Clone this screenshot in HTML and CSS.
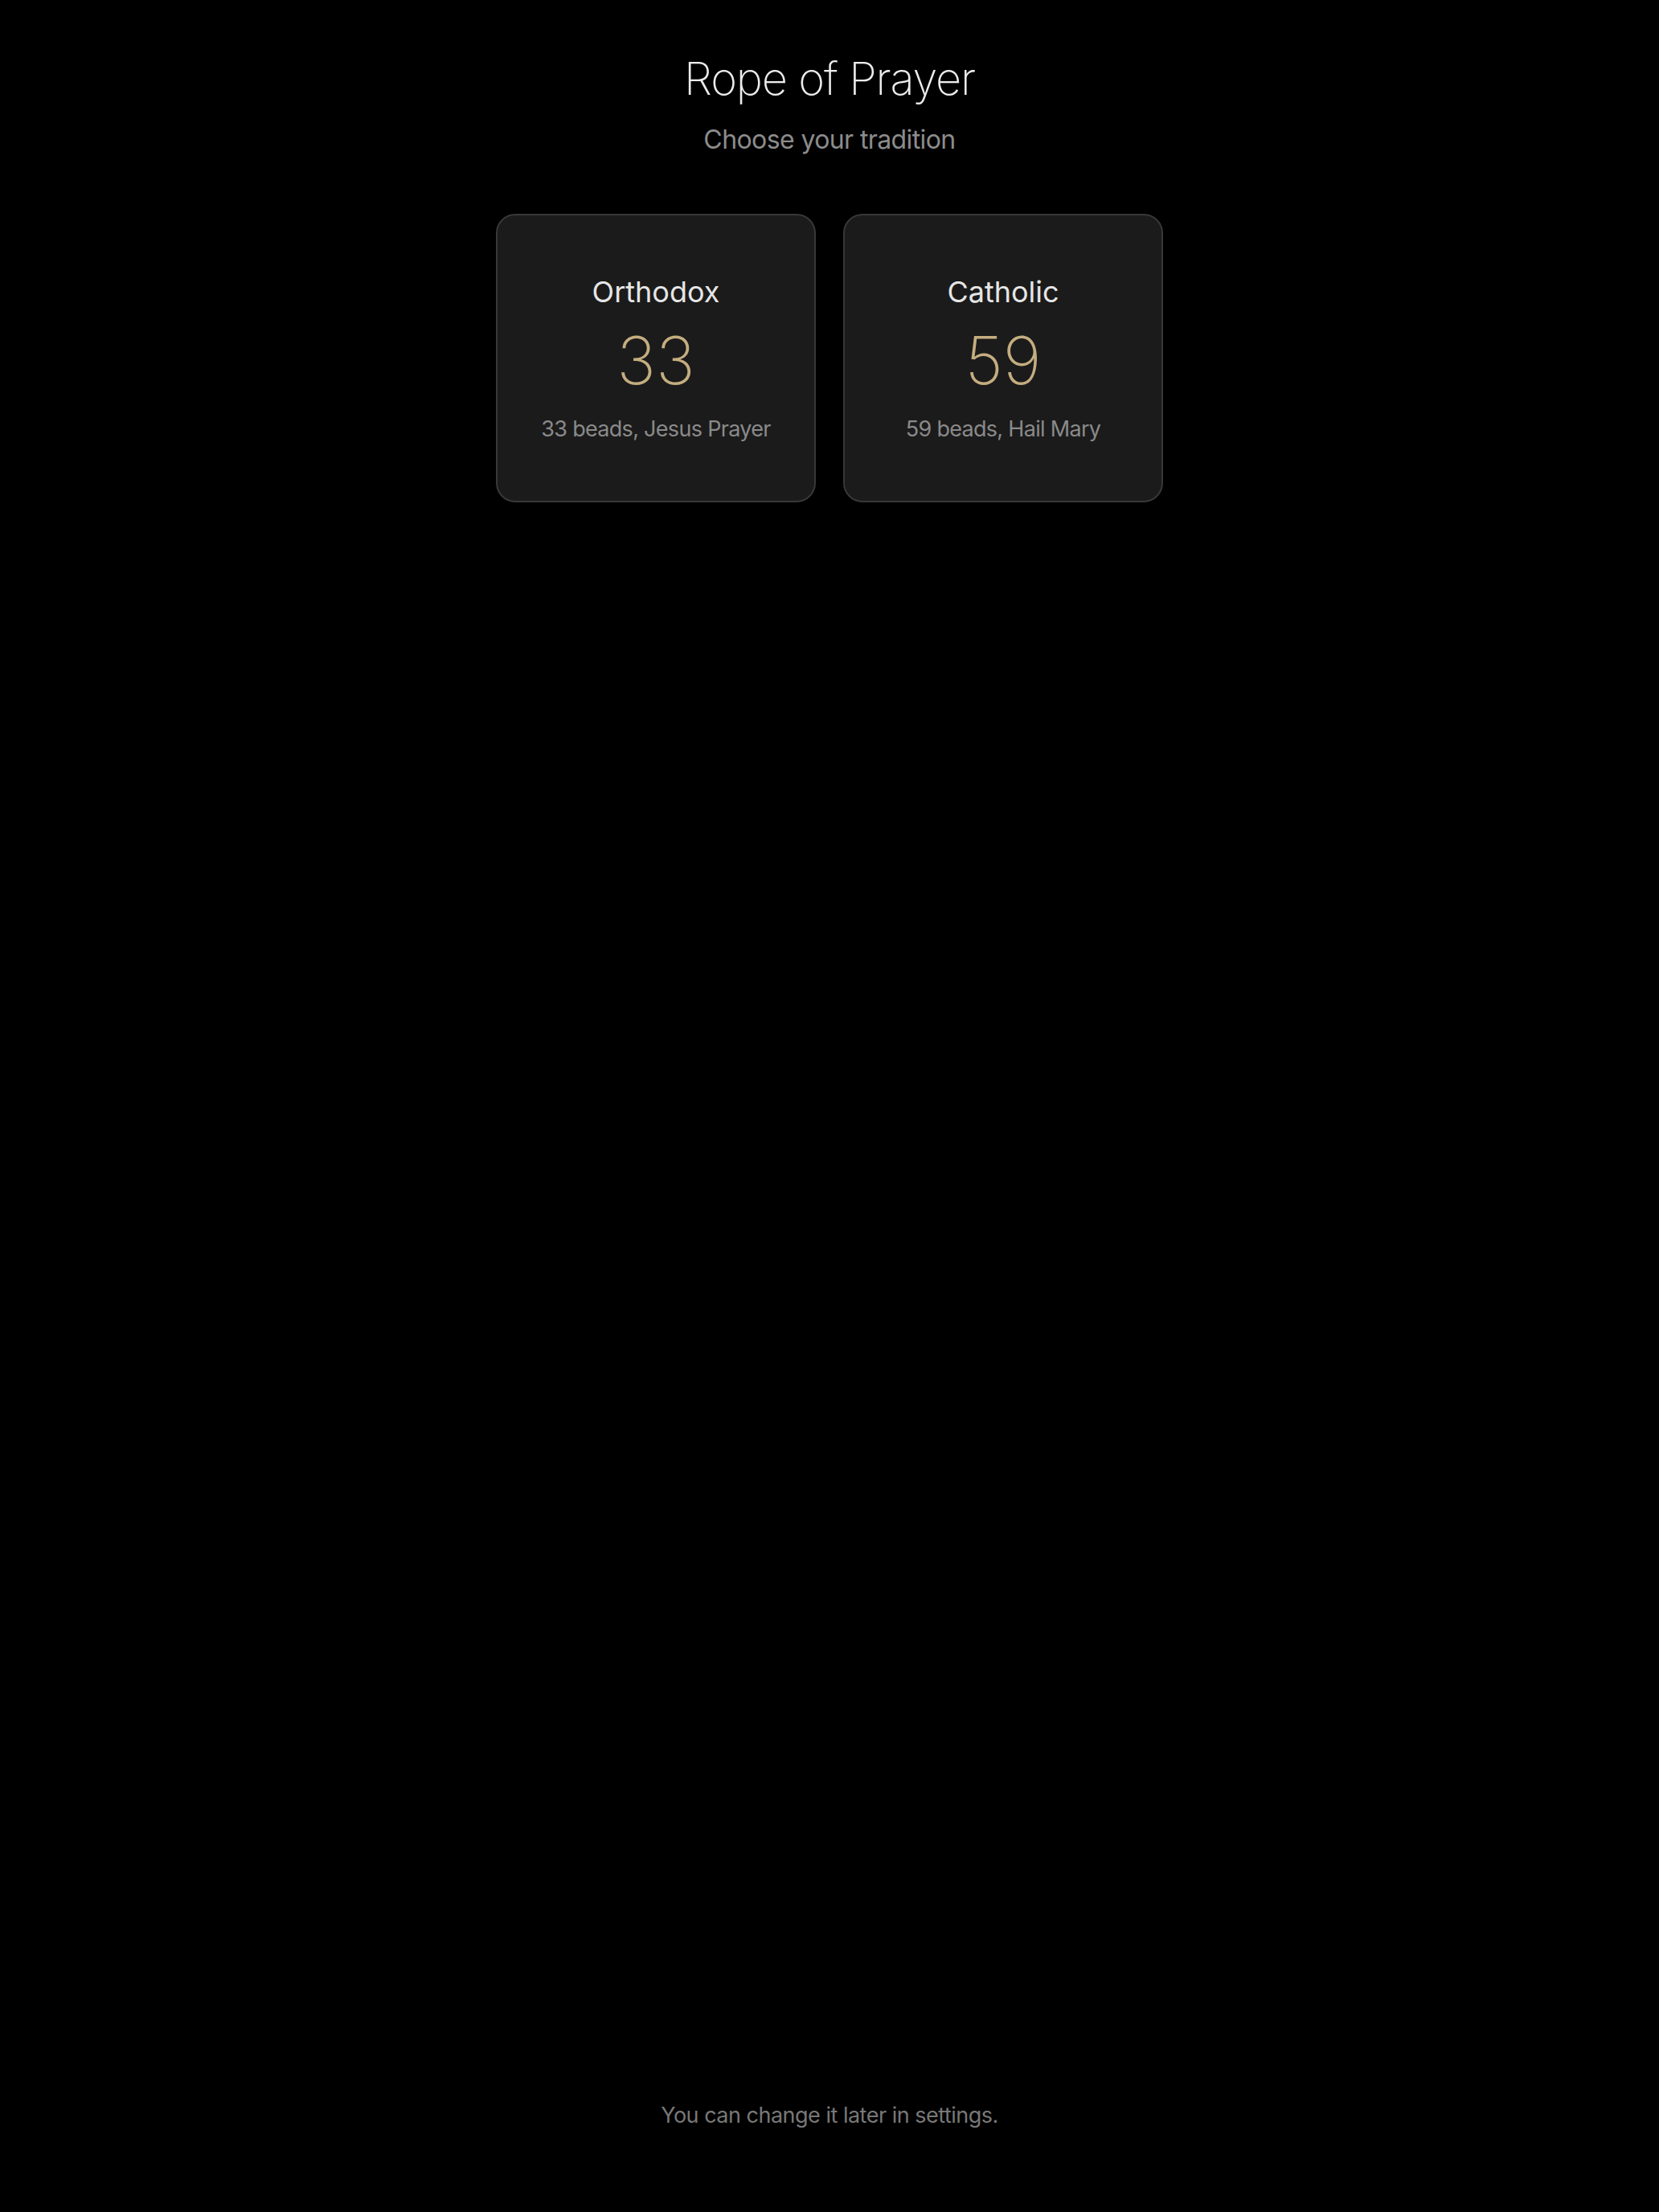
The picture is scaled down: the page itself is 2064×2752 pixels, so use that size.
FILE: index.html
```html
<!DOCTYPE html>
<html>
	<head>
		<meta charset="utf-8">
		<title>Rope of Prayer</title>
		<link rel="stylesheet" href="styles.css">
	</head>
	<body>
		<div class="screen">
			<h1 class="title">Rope of Prayer</h1>
			<p class="subtitle">Choose your tradition</p>
			<div class="choices">
				<div class="card">
					<span class="cardName">Orthodox</span>
					<span class="cardCount">33</span>
					<span class="cardDesc">33 beads, Jesus Prayer</span>
				</div>
				<div class="card">
					<span class="cardName">Catholic</span>
					<span class="cardCount">59</span>
					<span class="cardDesc">59 beads, Hail Mary</span>
				</div>
			</div>
			<p class="note">You can change it later in settings.</p>
		</div>
	</body>
</html>
```

FILE: styles.css
```css
*{
    margin: 0;
    padding: 0;
    box-sizing: border-box;
}
html,body{
    background-color: #000000;
}
body{
    font-family: Inter, "Noto Sans", "Liberation Sans", sans-serif;
    color: #e8e8e8;
}
.screen{
    min-height: 100vh;
    display: flex;
    flex-direction: column;
    align-items: center;
    padding: 64px 0 103px;
}
.title{
    font-size: 56px;
    line-height: 68px;
    font-weight: 200;
    letter-spacing: -1.2px;
    color: #ececec;
}
.subtitle{
    margin-top: 22px;
    font-size: 32px;
    line-height: 40px;
    letter-spacing: -0.6px;
    color: #8c8c8c;
}
.choices{
    margin-top: 72px;
    display: flex;
    gap: 34px;
}
.card{
    width: 398px;
    height: 359px;
    display: flex;
    flex-direction: column;
    align-items: center;
    padding-top: 73px;
    background-color: #1b1b1b;
    border: 2px solid #383838;
    border-radius: 24px;
    cursor: pointer;
}
.cardName{
    font-size: 36px;
    line-height: 44px;
    color: #e6e6e6;
}
.cardCount{
    margin-top: 16px;
    font-size: 82px;
    line-height: 96px;
    font-weight: 150;
    color: #c4ad80;
}
.cardDesc{
    margin-top: 20px;
    font-size: 27px;
    line-height: 34px;
    letter-spacing: -0.7px;
    color: #8a8a8a;
}
.note{
    margin-top: auto;
    font-size: 27px;
    line-height: 34px;
    letter-spacing: -0.5px;
    color: #787878;
}
```
